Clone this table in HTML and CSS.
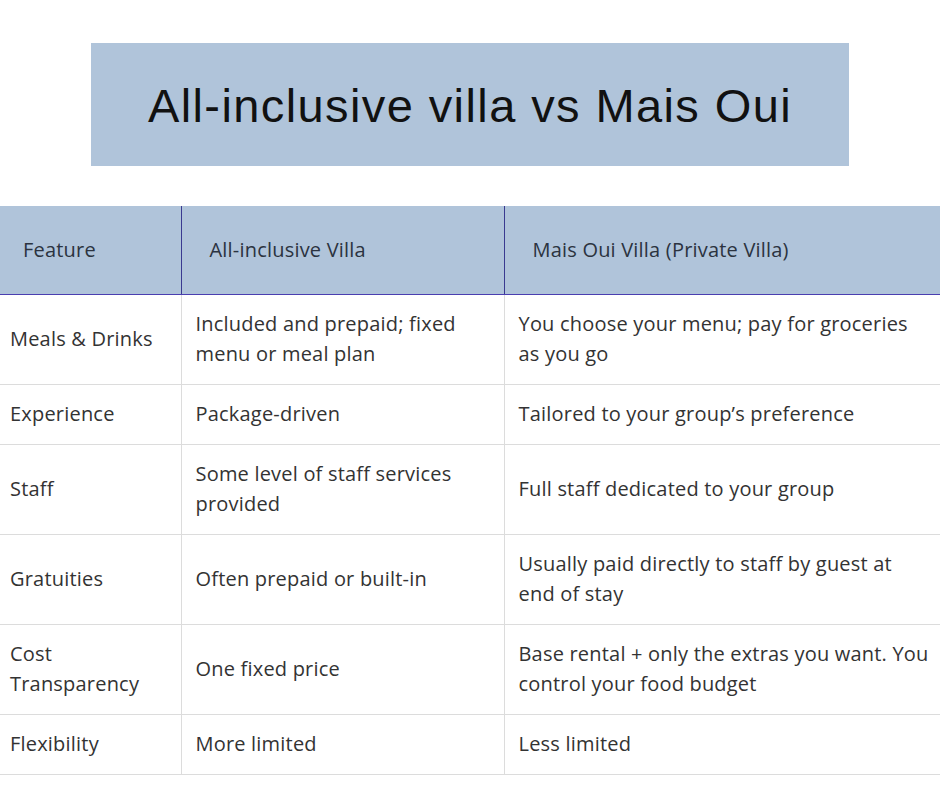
FILE: index.html
```html
<!DOCTYPE html>
<html>
<head>
<meta charset="utf-8">
<link rel="stylesheet" href="styles.css">
</head>
<body>
<div class="page">
  <div class="title-wrap">
    <h1 class="title">All-inclusive villa vs Mais Oui</h1>
  </div>
  <table class="cmp">
    <thead>
      <tr>
        <th class="c1">Feature</th>
        <th class="c2">All-inclusive Villa</th>
        <th class="c3">Mais Oui Villa (Private Villa)</th>
      </tr>
    </thead>
    <tbody>
      <tr class="tall">
        <td>Meals &amp; Drinks</td>
        <td>Included and prepaid; fixed<br>menu or meal plan</td>
        <td>You choose your menu; pay for groceries<br>as you go</td>
      </tr>
      <tr>
        <td>Experience</td>
        <td>Package-driven</td>
        <td>Tailored to your group’s preference</td>
      </tr>
      <tr class="tall">
        <td>Staff</td>
        <td>Some level of staff services<br>provided</td>
        <td>Full staff dedicated to your group</td>
      </tr>
      <tr class="tall">
        <td>Gratuities</td>
        <td>Often prepaid or built-in</td>
        <td>Usually paid directly to staff by guest at<br>end of stay</td>
      </tr>
      <tr class="tall">
        <td>Cost<br>Transparency</td>
        <td>One fixed price</td>
        <td>Base rental + only the extras you want. You<br>control your food budget</td>
      </tr>
      <tr>
        <td>Flexibility</td>
        <td>More limited</td>
        <td>Less limited</td>
      </tr>
    </tbody>
  </table>
</div>
</body>
</html>
```

FILE: styles.css
```css
html, body {
  margin: 0;
  padding: 0;
  background: #ffffff;
}
.page {
  width: 940px;
  height: 788px;
  overflow: hidden;
  padding-top: 43px;
  box-sizing: border-box;
}
.title-wrap {
  margin: 0 91px 0 91px;
  height: 123px;
  background: #b0c4da;
  display: flex;
  align-items: center;
  justify-content: center;
}
.title {
  margin: 0;
  font-family: "Liberation Sans", Arial, sans-serif;
  font-weight: 400;
  font-size: 47px;
  letter-spacing: 1.4px;
  color: #111111;
  padding-top: 2px;
}
.cmp {
  margin-top: 40px;
  width: 940px;
  border-collapse: collapse;
  table-layout: fixed;
  font-family: "Open Sans", Lato, sans-serif;
  font-size: 20px;
  letter-spacing: 0.2px;
  color: #333333;
}
.cmp th.c1 { width: 181px; }
.cmp th.c2 { width: 323px; }
.cmp th.c3 { width: 436px; }
.cmp th {
  background: #b0c4da;
  height: 88px;
  box-sizing: border-box;
  text-align: left;
  font-weight: 400;
  color: #2b3340;
  padding: 0 0 0 23px;
  border-bottom: 1px solid #4a3fb0;
  border-left: 1px solid #3a3a90;
  line-height: 30px;
}
.cmp th.c1 { border-left: none; }
.cmp th.c2 { padding-left: 28px; }
.cmp th.c3 { padding-left: 28px; }
.cmp td {
  height: 60px;
  box-sizing: border-box;
  padding: 0 0 0 14px;
  line-height: 30px;
  vertical-align: middle;
  white-space: nowrap;
  border-bottom: 1px solid #dcdcdc;
  border-left: 1px solid #dcdcdc;
}
.cmp td:first-child {
  border-left: none;
  padding-left: 10px;
}
.cmp tr.tall td {
  height: 90px;
}
```
